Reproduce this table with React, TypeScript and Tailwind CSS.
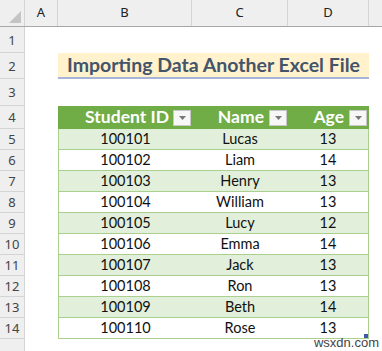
import React from "react";

type Student = { id: string; name: string; age: number };

const students: Student[] = [
  { id: "100101", name: "Lucas", age: 13 },
  { id: "100102", name: "Liam", age: 14 },
  { id: "100103", name: "Henry", age: 13 },
  { id: "100104", name: "William", age: 13 },
  { id: "100105", name: "Lucy", age: 12 },
  { id: "100106", name: "Emma", age: 14 },
  { id: "100107", name: "Jack", age: 13 },
  { id: "100108", name: "Ron", age: 13 },
  { id: "100109", name: "Beth", age: 14 },
  { id: "100110", name: "Rose", age: 13 },
];

const cellFont = { fontFamily: "Lato, 'Open Sans', sans-serif" };

function RowHead({ n, h }: { n?: number; h: string }) {
  return (
    <div className={`w-[25px] shrink-0 ${h} bg-[#efefef] border-r border-b border-[#d4d4d4] box-border flex items-center justify-center pt-[2px] text-[13px] text-[#444]`}>
      {n ?? ""}
    </div>
  );
}

function FilterBtn() {
  return (
    <div className="w-[18px] h-[16px] shrink-0 bg-[#f7f7f7] border border-[#c8c8c8] flex items-center justify-center">
      <svg width="7" height="4" viewBox="0 0 7 4">
        <path d="M0 0 L7 0 L3.5 4 Z" fill="#777" />
      </svg>
    </div>
  );
}

export default function App() {
  return (
    <div className="relative w-[382px] h-[351px] overflow-hidden bg-white" style={{ fontFamily: "'Noto Sans', 'Open Sans', sans-serif" }}>
      {/* column headers */}
      <div className="flex h-[27px] bg-[#efefef] border-b border-[#a8a8a8] box-border text-[13px] text-[#222]">
        <div className="w-[25px] shrink-0 border-r border-[#d4d4d4] relative">
          <svg className="absolute right-[3px] bottom-[3px]" width="12" height="12" viewBox="0 0 12 12">
            <path d="M12 0 L12 12 L0 12 Z" fill="#c4c4c4" />
          </svg>
        </div>
        <div className="w-[33px] shrink-0 border-r border-[#d4d4d4] flex items-center justify-center">A</div>
        <div className="w-[134px] shrink-0 border-r border-[#d4d4d4] flex items-center justify-center">B</div>
        <div className="w-[96px] shrink-0 border-r border-[#d4d4d4] flex items-center justify-center">C</div>
        <div className="w-[81px] shrink-0 border-r border-[#d4d4d4] flex items-center justify-center">D</div>
        <div className="flex-1" />
      </div>

      {/* row 1 */}
      <div className="flex">
        <RowHead n={1} h="h-[26px]" />
      </div>

      {/* row 2: title */}
      <div className="flex">
        <RowHead n={2} h="h-[26px]" />
        <div className="w-[33px] shrink-0" />
        <div
          className="w-[311px] h-[26px] box-border bg-[#fff2cc] border-b-2 border-[#a6b4d8] flex items-center justify-center text-[19.5px] font-bold text-[#44546a]"
          style={cellFont}
        >
          Importing Data Another Excel File
        </div>
      </div>

      {/* row 3 */}
      <div className="flex">
        <RowHead n={3} h="h-[27px]" />
      </div>

      {/* row 4: table header */}
      <div className="flex">
        <RowHead n={4} h="h-[23px]" />
        <div className="w-[33px] shrink-0" />
        <div className="flex h-[23px] bg-[#70ad47] text-white font-bold text-[17.5px]" style={cellFont}>
          <div className="w-[134px] flex items-center justify-end gap-[4px] pr-[1px]">
            <span>Student ID</span>
            <FilterBtn />
          </div>
          <div className="w-[96px] flex items-center justify-end gap-[5px] pr-[1px]">
            <span>Name</span>
            <FilterBtn />
          </div>
          <div className="w-[81px] flex items-center justify-end gap-[5px] pr-[2px]">
            <span>Age</span>
            <FilterBtn />
          </div>
        </div>
      </div>

      {/* data rows */}
      {students.map((s, i) => (
        <div className="flex" key={s.id}>
          <RowHead n={5 + i} h="h-[21px]" />
          <div className="w-[33px] shrink-0" />
          <div
            className={`flex h-[21px] w-[311px] box-border border-b border-x border-[#a9d08e] text-[14.5px] text-[#111] ${i % 2 === 0 ? "bg-[#e2efda]" : "bg-white"}`}
            style={cellFont}
          >
            <div className="w-[133px] flex items-center justify-center">{s.id}</div>
            <div className="w-[96px] flex items-center justify-center">{s.name}</div>
            <div className="w-[80px] flex items-center justify-center">{s.age}</div>
          </div>
        </div>
      ))}

      {/* bottom partial row */}
      <div className="flex">
        <RowHead h="h-[21px]" />
      </div>

      {/* table resize handle */}
      <div className="absolute left-[364px] top-[334px] w-[4px] h-[4px] bg-[#3e57a8]" />

      {/* watermark */}
      <div className="absolute right-[3px] bottom-[2px] text-[13px] leading-none text-[#444]" style={{ fontFamily: "'Liberation Sans', sans-serif" }}>
        wsxdn.com
      </div>
    </div>
  );
}
